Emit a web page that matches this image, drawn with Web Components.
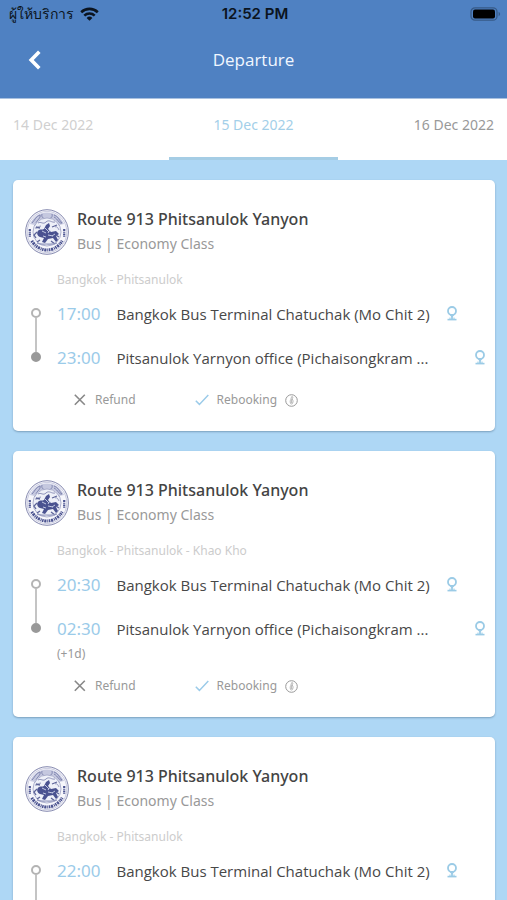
<!DOCTYPE html>
<html lang="en">
<head>
<meta charset="utf-8">
<meta name="viewport" content="width=device-width, initial-scale=1">
<title>Departure</title>
<style>
    body {
        margin: 0;
        font-family: "Noto Sans", "Open Sans", sans-serif;
        background: #aed7f5;
    }
</style>
</head>
<body>

<departure-page>
    <status-bar slot="top" carrier="ผู้ให้บริการ" time="12:52 PM"></status-bar>
    <nav-bar slot="top">Departure</nav-bar>
    <date-tabs slot="top" dates="14 Dec 2022,15 Dec 2022,16 Dec 2022" current="1"></date-tabs>

    <trip-card name="Route 913 Phitsanulok Yanyon" kind="Bus | Economy Class" route="Bangkok - Phitsanulok">
        <trip-stop time="17:00">Bangkok Bus Terminal Chatuchak (Mo Chit 2)</trip-stop>
        <trip-stop time="23:00" last>Pitsanulok Yarnyon office (Pichaisongkram ...</trip-stop>
    </trip-card>
    <trip-card name="Route 913 Phitsanulok Yanyon" kind="Bus | Economy Class" route="Bangkok - Phitsanulok - Khao Kho">
        <trip-stop time="20:30">Bangkok Bus Terminal Chatuchak (Mo Chit 2)</trip-stop>
        <trip-stop time="02:30" note="(+1d)" last>Pitsanulok Yarnyon office (Pichaisongkram ...</trip-stop>
    </trip-card>
    <trip-card name="Route 913 Phitsanulok Yanyon" kind="Bus | Economy Class" route="Bangkok - Phitsanulok" bare>
        <trip-stop time="22:00">Bangkok Bus Terminal Chatuchak (Mo Chit 2)</trip-stop>
    </trip-card>
</departure-page>

<script>
class DeparturePage extends HTMLElement {

    constructor() {
        super();
        this.root = this.attachShadow({ mode: 'open' });
    }

    connectedCallback() {
        this.root.innerHTML = `
            <style>
                :host {
                    display: flex;
                    flex-direction: column;
                    height: 100vh;
                }
                header {
                    flex: none;
                }
                main {
                    flex: 1;
                    min-height: 0;
                    overflow-y: auto;
                    scrollbar-width: none;
                    display: flex;
                    flex-direction: column;
                    gap: 20px;
                    padding: 20px 12px 20px 13px;
                }
            </style>
            <header><slot name="top"></slot></header>
            <main><slot></slot></main>
        `;
    }

}


class StatusBar extends HTMLElement {

    constructor() {
        super();
        this.root = this.attachShadow({ mode: 'open' });
    }

    connectedCallback() {
        this.root.innerHTML = `
            <style>
                :host {
                    display: grid;
                    grid-template-columns: 1fr auto 1fr;
                    align-items: center;
                    height: 27px;
                    padding: 0 6px 0 9px;
                    background: #4f81c2;
                    color: #0b1420;
                }
                .carrier {
                    display: flex;
                    align-items: center;
                    gap: 6px;
                    font-size: 14px;
                    line-height: 20px;
                }
                .time {
                    font: 600 15px/20px Inter, "Liberation Sans", sans-serif;
                }
                .battery {
                    justify-self: end;
                }
                svg {
                    display: block;
                }
            </style>
            <div class="carrier">
                <span>${this.getAttribute('carrier')}</span>
                <svg width="19" height="14" viewBox="0 0 19 14">
                    <g fill="none" stroke="#0b1420" stroke-width="2.6">
                        <path d="M1.2 5.2a12 12 0 0 1 16.6 0"/>
                        <path d="M4.3 8.6a7.6 7.6 0 0 1 10.4 0"/>
                    </g>
                    <path d="M9.5 13.8 6.6 10.9a4.2 4.2 0 0 1 5.8 0z" fill="#0b1420"/>
                </svg>
            </div>
            <span class="time">${this.getAttribute('time')}</span>
            <svg class="battery" width="31" height="14" viewBox="0 0 31 14">
                <rect x="1" y=".8" width="26" height="12.4" rx="4" fill="none" stroke="#375a87" stroke-width="1.3"/>
                <rect x="3" y="2.6" width="22" height="8.8" rx="2" fill="#000"/>
                <path d="M28.6 4.8c2 .8 2 3.6 0 4.4z" fill="#375a87"/>
            </svg>
        `;
    }

}


class NavBar extends HTMLElement {

    constructor() {
        super();
        this.root = this.attachShadow({ mode: 'open' });
    }

    connectedCallback() {
        this.root.innerHTML = `
            <style>
                :host {
                    display: grid;
                    grid-template-columns: 1fr auto 1fr;
                    align-items: center;
                    height: 66px;
                    padding: 0 20px 5px;
                    border-bottom: 1px solid #a9c1e0;
                    background: #4f81c2;
                }
                button {
                    justify-self: start;
                    width: 30px;
                    height: 30px;
                    padding: 0;
                    border: 0;
                    background: none;
                }
                svg {
                    display: block;
                    margin: auto;
                }
                h1 {
                    margin: 0;
                    font-family: "Open Sans", sans-serif;
                    font-size: 17px;
                    font-weight: 400;
                    line-height: 24px;
                    color: #f1f7ff;
                }
            </style>
            <button aria-label="Back">
                <svg width="14" height="20" viewBox="0 0 14 20">
                    <path d="M11.3 1.8 3.2 10l8.1 8.2" fill="none" stroke="#fff" stroke-width="3.6"/>
                </svg>
            </button>
            <h1><slot></slot></h1>
        `;
    }

}


class DateTabs extends HTMLElement {

    constructor() {
        super();
        this.root = this.attachShadow({ mode: 'open' });
    }

    get current() {
        return parseInt(this.getAttribute('current'));
    }

    set current(index) {
        this.setAttribute('current', index);
    }

    static get observedAttributes() {
        return ['current'];
    }

    attributeChangedCallback() {
        this.render();
    }

    render() {
        const dates = this.getAttribute('dates').split(',');
        this.root.innerHTML = `
            <style>
                :host {
                    display: grid;
                    grid-template-columns: repeat(3, 1fr);
                    height: 61px;
                    background: #fff;
                }
                button {
                    padding: 0 13px 7px;
                    border: 0;
                    border-bottom: 3px solid transparent;
                    background: none;
                    font: 400 14px/20px "Noto Sans", sans-serif;
                    color: #999;
                    text-align: center;
                }
                button:first-of-type {
                    text-align: left;
                }
                button:last-of-type {
                    text-align: right;
                }
                button.past {
                    color: #d0d0d0;
                }
                button.current {
                    color: #a3cfe9;
                    border-bottom-color: #a5cde5;
                }
            </style>
            ${dates.map((date, i) => {
                const cls = i === this.current ? 'current' : i < this.current ? 'past' : '';
                return `<button class="${cls}">${date}</button>`;
            }).join('')}
        `;
        this.root.querySelectorAll('button').forEach((button, i) => {
            button.addEventListener('click', () => {
                this.current = i;
            });
        });
    }

}


class BusSeal extends HTMLElement {

    constructor() {
        super();
        this.root = this.attachShadow({ mode: 'open' });
    }

    connectedCallback() {
        this.root.innerHTML = `
            <style>
                :host {
                    display: block;
                    width: 44px;
                    height: 46px;
                }
                svg {
                    display: block;
                }
            </style>
            <svg width="44" height="46" viewBox="0 0 44 46" fill="none">
                <ellipse cx="22" cy="23" rx="21.4" ry="22.3" fill="#f6f6fb" stroke="#8589af" stroke-width="1"/>
                <ellipse cx="22" cy="23" rx="19.8" ry="20.6" stroke="#b9bbd5" stroke-width=".7"/>
                <path d="M5 15C9 7 15 3.5 22 3.5S35 7 39 15l-5 1c-3-5-7-7-12-7s-9 2-12 7z" fill="#c5c8df"/>
                <path d="M7 14c3-3 4-7 8-8 1 3-3 5-4 8m6-9c-1 4 2 4 5 7 3-3 6-3 5-7m2 1c4 1 5 5 8 8-3 1-4-4-8-6M9 17c5-4 7-6 13-6s9 2 13 6" stroke="#777da9" stroke-width=".9"/>
                <ellipse cx="22" cy="23" rx="14" ry="14" fill="#eef0f8" stroke="#9da1c3" stroke-width=".8"/>
                <path d="M13 14c3-2 5 2 8-1s6 1 9 0M10 19c3 1 3-2 6-2m14 1c2-1 3 1 4 3" stroke="#8e93ba" stroke-width="1"/>
                <path d="M15 28c-3-1-4-5-1-7 2-1 3 0 5-1l2-4 3-2 1 3-2 3 3 3 5-1 3 3-3 2 2 4-2 2-3-4-5 1-3 4-3-1 2-4z" fill="#4a5290"/>
                <path d="M17 22l4 2m-1-5 4 4m-1 3 5 1m-10 0 3 1m4-7-2 3m7 1-3 2" stroke="#c3c9e2" stroke-width="1"/>
                <path d="M12 23l-3 3 2 3m4-10-4-1m16 0 5-2m-17 15-3 2m14-1 4 3m1-9 3 2" stroke="#5d6499" stroke-width="1.3"/>
                <path d="M12 34c4 2 6 1 9 1s7 1 11-1" stroke="#8f94bb" stroke-width="1.2"/>
                <path d="M4.8 20v8M39.2 20v8" stroke="#4b5390" stroke-width="2.2" stroke-dasharray="2 .8 1 .7"/>
                <path d="M6.8 31.8C14 44 30 44 37.2 31.8" stroke="#4b5390" stroke-width="3" stroke-dasharray="1.5 .7 2.2 .8 1 .6"/>
            </svg>
        `;
    }

}


class TripStop extends HTMLElement {

    constructor() {
        super();
        this.root = this.attachShadow({ mode: 'open' });
    }

    connectedCallback() {
        const last = this.hasAttribute('last');
        const note = this.getAttribute('note');
        this.root.innerHTML = `
            <style>
                :host {
                    display: flex;
                    min-height: 44px;
                }
                :host(:only-child) {
                    min-height: 88px;
                }
                .track {
                    flex: none;
                    display: flex;
                    flex-direction: column;
                    align-items: center;
                    width: 10px;
                    margin-right: 16px;
                }
                .track::before {
                    content: "";
                    height: 16px;
                    border-left: 2px solid ${last ? '#c4c4c4' : 'transparent'};
                }
                .dot {
                    box-sizing: border-box;
                    width: 10px;
                    height: 10px;
                    border: 2px solid #b4b4b4;
                    border-radius: 50%;
                }
                :host([last]) .dot {
                    border-color: #999;
                    background: #999;
                }
                .track::after {
                    content: "";
                    flex: 1;
                    border-left: 2px solid ${last ? 'transparent' : '#c4c4c4'};
                }
                .body {
                    flex: 1;
                    min-width: 0;
                    padding-top: 10px;
                }
                .line {
                    display: flex;
                    align-items: center;
                    line-height: 24px;
                }
                time {
                    flex: none;
                    margin-right: 16px;
                    font-size: 17px;
                    color: #9bcbe9;
                }
                .place {
                    overflow: hidden;
                    white-space: nowrap;
                    text-overflow: ellipsis;
                    font-family: "Open Sans", sans-serif;
                    font-size: 15px;
                    color: #484848;
                }
                :host([last]) .place {
                    flex: 1;
                }
                button {
                    flex: none;
                    height: 16px;
                    margin-left: 17px;
                    padding: 0;
                    border: 0;
                    background: none;
                }
                svg {
                    display: block;
                }
                .note {
                    font-size: 12px;
                    line-height: 25px;
                    color: #999;
                }
            </style>
            <div class="track"><span class="dot"></span></div>
            <div class="body">
                <div class="line">
                    <time>${this.getAttribute('time')}</time>
                    <span class="place"><slot></slot></span>
                    <button aria-label="Show on map">
                        <svg width="10" height="16" viewBox="0 0 10 16" fill="none" stroke="#9bcbe6">
                            <circle cx="5" cy="5" r="4" stroke-width="1.8"/>
                            <path d="M3 8.4 5 10.8l2-2.4" stroke-width="1.3"/>
                            <path d="M5 9.4V13" stroke-width="1.6"/>
                            <path d="M.5 13.6h9" stroke-width="1.6"/>
                            <path d="M2 12.2h6" stroke-width=".8"/>
                        </svg>
                    </button>
                </div>
                ${note ? `<div class="note">${note}</div>` : ''}
            </div>
        `;
    }

}


class TripCard extends HTMLElement {

    constructor() {
        super();
        this.root = this.attachShadow({ mode: 'open' });
    }

    connectedCallback() {
        this.root.innerHTML = `
            <style>
                :host {
                    display: block;
                    flex: none;
                    padding: 27px 10px 11px 12px;
                    border-radius: 5px;
                    background: #fff;
                    box-shadow: 0 1px 2px rgba(60, 90, 120, .45);
                }
                .head {
                    display: flex;
                    align-items: center;
                    gap: 8px;
                    height: 50px;
                }
                h2 {
                    margin: 0;
                    font-size: 16px;
                    font-weight: 500;
                    line-height: 24px;
                    color: #444;
                }
                .kind {
                    margin: 0;
                    font-size: 14px;
                    line-height: 26px;
                    color: #999;
                }
                .route {
                    margin: 13px 0 2px 32px;
                    font-size: 12px;
                    line-height: 20px;
                    color: #ccc;
                }
                .stops {
                    padding-left: 6px;
                }
                .terms {
                    display: flex;
                    align-items: center;
                    gap: 59px;
                    height: 40px;
                    padding-left: 48px;
                    font-size: 12px;
                    line-height: 20px;
                    color: #999;
                }
                .term {
                    display: flex;
                    align-items: center;
                    gap: 8px;
                }
                button {
                    padding: 0;
                    border: 0;
                    background: none;
                }
                svg {
                    display: block;
                }
            </style>
            <div class="head">
                <bus-seal></bus-seal>
                <div>
                    <h2>${this.getAttribute('name')}</h2>
                    <p class="kind">${this.getAttribute('kind')}</p>
                </div>
            </div>
            <p class="route">${this.getAttribute('route')}</p>
            <div class="stops"><slot></slot></div>
            ${this.hasAttribute('bare') ? '' : `
            <div class="terms">
                <span class="term">
                    <svg width="14" height="14" viewBox="0 0 14 14">
                        <path d="M1.8 1.8l10 10m0-10-10 10" stroke="#888" stroke-width="1.6"/>
                    </svg>
                    Refund
                </span>
                <span class="term">
                    <svg width="14" height="12" viewBox="0 0 14 12">
                        <path d="M.8 6.8 4.4 10.4 13.3 1" fill="none" stroke="#9bcbe9" stroke-width="1.5"/>
                    </svg>
                    Rebooking
                    <button aria-label="Rebooking terms">
                        <svg width="13" height="13" viewBox="0 0 13 13" fill="none" stroke="#999">
                            <circle cx="6.5" cy="6.5" r="5.8"/>
                            <path d="M6.9 2.3c1.4.6 1 2 .2 2.6 1.4 1.6 1.4 4-.6 5.4-1.8-1.2-1.6-3.4-.6-5 .2-1 .4-2 1-3zM6.6 5.2v4" stroke-width=".7"/>
                        </svg>
                    </button>
                </span>
            </div>`}
        `;
    }

}


customElements.define('departure-page', DeparturePage);
customElements.define('status-bar', StatusBar);
customElements.define('nav-bar', NavBar);
customElements.define('date-tabs', DateTabs);
customElements.define('bus-seal', BusSeal);
customElements.define('trip-stop', TripStop);
customElements.define('trip-card', TripCard);
</script>
</body>
</html>
